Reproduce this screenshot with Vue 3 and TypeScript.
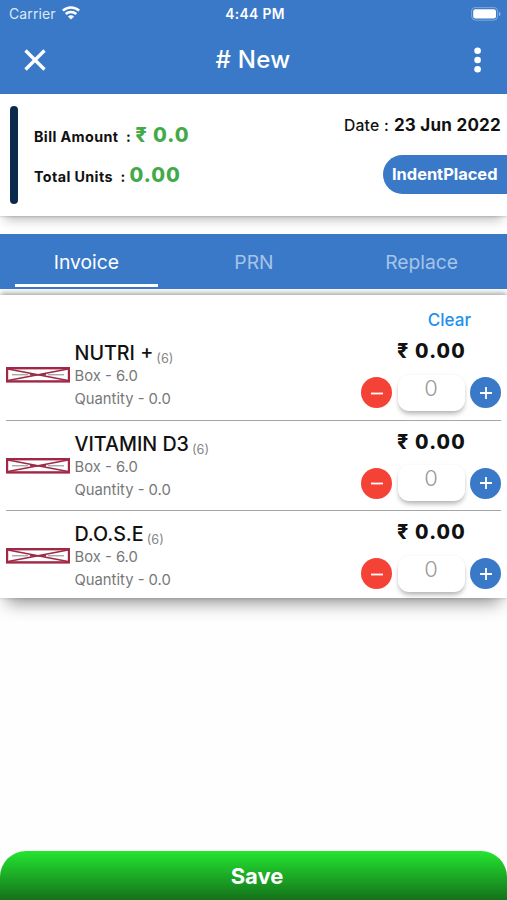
<script setup lang="ts">
import { ref } from 'vue'

interface Product {
  name: string
  pack: number
  box: string
  quantity: string
  price: string
  count: number
}

const tabs: string[] = ['Invoice', 'PRN', 'Replace']
const activeTab = ref(0)

const products = ref<Product[]>([
  { name: 'NUTRI +', pack: 6, box: '6.0', quantity: '0.0', price: '0.00', count: 0 },
  { name: 'VITAMIN D3', pack: 6, box: '6.0', quantity: '0.0', price: '0.00', count: 0 },
  { name: 'D.O.S.E', pack: 6, box: '6.0', quantity: '0.0', price: '0.00', count: 0 },
])

function step(item: Product, delta: number): void {
  item.count = Math.max(0, item.count + delta)
}

function clearAll(): void {
  products.value.forEach((p) => (p.count = 0))
}
</script>

<template>
  <div class="screen">
    <header class="header">
      <div class="status">
        <div class="carrier">
          <span>Carrier</span>
          <svg class="wifi" width="18" height="14" viewBox="0 0 18 14" fill="none" stroke="#fff" stroke-width="2.5">
            <path d="M0.9 4.6C5.3 0.3 12.7 0.3 17.1 4.6" />
            <path d="M3.7 8C6.7 5.2 11.3 5.2 14.3 8" />
            <path d="M9 13.6L5.9 10.5C7.6 8.8 10.4 8.8 12.1 10.5Z" fill="#fff" stroke="none" />
          </svg>
        </div>
        <span class="clock">4:44 PM</span>
        <div class="power">
          <svg width="30" height="14" viewBox="0 0 30 14">
            <rect x="0.6" y="0.6" width="26" height="12.6" rx="4" fill="none" stroke="#fff" stroke-opacity=".35" />
            <rect x="2.2" y="2.2" width="22.8" height="9.4" rx="2.3" fill="#fff" />
            <path d="M28 4.8Q29.6 5.5 29.6 7T28 9.2Z" fill="#fff" fill-opacity=".45" />
          </svg>
        </div>
      </div>
      <div class="appbar">
        <button class="icon-btn" aria-label="Close">
          <svg width="22" height="22" viewBox="0 0 22 22" stroke="#fff" stroke-width="3.3">
            <path d="M1.5 1.5L20.5 20.5M20.5 1.5L1.5 20.5" />
          </svg>
        </button>
        <h1 class="title"># New</h1>
        <button class="icon-btn more" aria-label="More">
          <svg width="8" height="26" viewBox="0 0 8 26" fill="#fff">
            <circle cx="3.6" cy="3.8" r="3.3" />
            <circle cx="3.6" cy="13" r="3.3" />
            <circle cx="3.6" cy="22.2" r="3.3" />
          </svg>
        </button>
      </div>
    </header>

    <section class="summary">
      <div class="accent"></div>
      <div class="totals">
        <div class="total"><span class="label">Bill Amount&nbsp; :</span><span class="value">₹ 0.0</span></div>
        <div class="total"><span class="label">Total Units&nbsp; :</span><span class="value">0.00</span></div>
      </div>
      <div class="meta">
        <div class="date"><span class="date-label">Date :</span> <b>23 Jun 2022</b></div>
        <div class="state">IndentPlaced</div>
      </div>
    </section>

    <nav class="tabs">
      <button
        v-for="(tab, i) in tabs"
        :key="tab"
        class="tab"
        :class="{ active: i === activeTab }"
        @click="activeTab = i"
      >
        {{ tab }}
      </button>
    </nav>

    <main class="list">
      <div class="list-head"><button class="clear" @click="clearAll">Clear</button></div>
      <article v-for="item in products" :key="item.name" class="row">
        <svg class="thumb" width="64" height="16" viewBox="0 0 64 16" fill="none">
          <path d="M6 7.8H22M42 7.8H58" stroke="#888" stroke-width="1" />
          <path d="M24 7.8H40" stroke="#7d2238" stroke-width="1.4" />
          <path d="M2 2L62 13.5M62 2L2 13.5" stroke="#9c2a47" stroke-width="1.7" />
          <rect x="1" y="1.2" width="62" height="13.2" stroke="#a02846" stroke-width="2.4" />
        </svg>
        <div class="info">
          <div class="name-line">
            <span class="name">{{ item.name }}</span><span class="pack">({{ item.pack }})</span>
          </div>
          <div class="detail">Box - {{ item.box }}</div>
          <div class="detail">Quantity - {{ item.quantity }}</div>
        </div>
        <div class="order">
          <div class="price">₹ {{ item.price }}</div>
          <div class="stepper">
            <button class="round minus" aria-label="Decrease" @click="step(item, -1)">
              <svg width="14" height="14" viewBox="0 0 14 14" stroke="#fff" stroke-width="1.8"><path d="M1 7.5H13" /></svg>
            </button>
            <div class="count">{{ item.count }}</div>
            <button class="round plus" aria-label="Increase" @click="step(item, 1)">
              <svg width="14" height="14" viewBox="0 0 14 14" stroke="#fff" stroke-width="1.8"><path d="M1 7H13M7 1V13" /></svg>
            </button>
          </div>
        </div>
      </article>
    </main>

    <button class="save">Save</button>
  </div>
</template>

<style>
body {
  margin: 0;
  background: #fefefe;
}
</style>

<style scoped>
.screen {
  display: flex;
  flex-direction: column;
  height: 900px;
  overflow: hidden;
  font-family: Inter, "Liberation Sans", sans-serif;
  color: #111;
  background: #fefefe;
}
.screen * {
  box-sizing: border-box;
}
button {
  border: 0;
  padding: 0;
  background: none;
  font: inherit;
  color: inherit;
}
svg {
  display: block;
}
.header {
  flex: none;
  height: 94px;
  background: #3a79c8;
  color: #fff;
}
.status {
  display: grid;
  grid-template-columns: 1fr auto 1fr;
  align-items: center;
  height: 27px;
  padding: 0 6px 0 9px;
  font-size: 14px;
}
.carrier {
  display: flex;
  align-items: center;
  gap: 6px;
  color: #dce8f6;
  letter-spacing: 0.1px;
}
.wifi {
  margin-top: -2px;
}
.clock {
  font-size: 13.8px;
  font-weight: 600;
  letter-spacing: 0.35px;
}
.power {
  display: flex;
  justify-content: flex-end;
}
.appbar {
  display: flex;
  align-items: center;
  justify-content: space-between;
  height: 65px;
  padding: 0 25px 0 24px;
}
.icon-btn {
  display: flex;
  width: 22px;
}
.more {
  justify-content: flex-end;
}
.title {
  margin: 0;
  font-size: 24px;
  font-weight: 500;
  letter-spacing: 0.3px;
}
.summary {
  position: relative;
  flex: none;
  display: flex;
  height: 122px;
  padding: 12px 0 12px 10px;
  background: #fff;
  box-shadow: 0 9px 10px -5px rgba(0, 0, 0, 0.24), 0 1px 2px rgba(0, 0, 0, 0.16);
}
.accent {
  width: 8px;
  height: 98px;
  border-radius: 4px;
  background: #0b294f;
}
.totals {
  flex: 1;
  padding: 9px 0 0 16px;
}
.total {
  display: flex;
  align-items: baseline;
  height: 40px;
  line-height: 40px;
}
.label {
  font-size: 14.3px;
  font-weight: 650;
  letter-spacing: 0.4px;
  white-space: nowrap;
}
.value {
  margin-left: 4px;
  font-size: 20px;
  font-weight: 800;
  letter-spacing: 0.95px;
  color: #43aa49;
  white-space: nowrap;
}
.meta {
  display: flex;
  flex-direction: column;
  align-items: flex-end;
}
.date {
  height: 37px;
  padding: 7px 6px 0 0;
  font-size: 17px;
  letter-spacing: 0.24px;
  line-height: 24px;
  white-space: nowrap;
}
.date-label {
  font-size: 15.7px;
  font-weight: 500;
}
.date b {
  font-weight: 650;
}
.state {
  width: 124px;
  height: 39px;
  margin-top: 12px;
  padding-left: 9px;
  border-radius: 20px 0 0 20px;
  background: #3a79c8;
  color: #fff;
  font-size: 16.4px;
  font-weight: 700;
  line-height: 38px;
}
.tabs {
  position: relative;
  z-index: 1;
  flex: none;
  display: grid;
  grid-template-columns: repeat(3, 1fr);
  height: 55px;
  margin-top: 18px;
  padding: 0 2px;
  background: #3a79c8;
}
.tab {
  height: 53px;
  margin: 0 12px 0 13px;
  padding-top: 5px;
  border-bottom: 3px solid transparent;
  color: #a6c4e8;
  font-size: 19.3px;
}
.tab.active {
  border-color: #fff;
  color: #fff;
}
.list {
  position: relative;
  flex: none;
  height: 303px;
  margin-top: 6px;
  background: #fff;
  box-shadow: 0 12px 16px -7px rgba(0, 0, 0, 0.42), 0 0 4px rgba(0, 0, 0, 0.2), 0 -4px 5px -1px rgba(0, 0, 0, 0.22);
}
.list-head {
  display: flex;
  justify-content: flex-end;
  height: 35px;
  padding: 10px 36px 0 0;
}
.clear {
  height: 30px;
  color: #2190ef;
  font-size: 17px;
  font-weight: 500;
  line-height: 30px;
}
.row {
  display: flex;
  height: 90.6px;
  margin: 0 6px;
  border-bottom: 1px solid #a5a5a5;
}
.row:last-child {
  border-color: transparent;
}
.thumb {
  flex: none;
  margin-top: 37px;
}
.info {
  flex: 1;
  padding: 11px 0 0 4.5px;
}
.name-line {
  display: flex;
  align-items: baseline;
  gap: 3px;
  height: 24px;
  line-height: 25px;
}
.name {
  font-size: 19.7px;
  font-weight: 540;
}
.pack {
  position: relative;
  top: 3px;
  font-size: 12.7px;
  color: #858585;
}
.detail {
  height: 23px;
  color: #777;
  font-size: 14.8px;
  line-height: 23px;
}
.order {
  width: 140px;
}
.price {
  height: 39px;
  padding: 9px 0 0 36px;
  font-size: 19.5px;
  font-weight: 800;
  letter-spacing: 1.2px;
  line-height: 24px;
}
.stepper {
  display: flex;
  align-items: center;
  justify-content: space-between;
  height: 47px;
}
.round {
  display: grid;
  place-items: center;
  width: 31px;
  height: 31px;
  border-radius: 50%;
}
.minus {
  background: #f44336;
}
.plus {
  background: #3a79c8;
}
.count {
  width: 67px;
  height: 36px;
  border-radius: 11px;
  background: #fff;
  box-shadow: 0 4px 5px -1px rgba(0, 0, 0, 0.28), 0 0 3px rgba(0, 0, 0, 0.06);
  color: #9b9b9b;
  font-size: 22px;
  font-weight: 300;
  line-height: 27px;
  text-align: center;
}
.save {
  flex: none;
  height: 49px;
  margin-top: auto;
  padding-left: 7px;
  border-radius: 26px 26px 0 0;
  background: linear-gradient(#24e531, #14711a);
  color: #fff;
  font-size: 22px;
  font-weight: 700;
  line-height: 51px;
}
</style>
